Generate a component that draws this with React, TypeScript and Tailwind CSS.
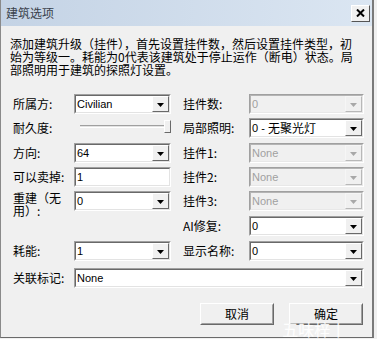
import React from "react";

const CJK = "font-['Noto_Sans_CJK_SC','Noto_Sans_CJK_JP',sans-serif]";
const LAT = "font-['Liberation_Sans','Noto_Sans_CJK_SC',sans-serif]";

function Arrow({ disabled }: { disabled?: boolean }) {
  return (
    <div
      className={`w-[17px] h-full flex items-center justify-center border bg-[#f0f0f0] ${
        disabled
          ? "border-t-[#f6f6f6] border-l-[#f6f6f6] border-b-[#b8b8b8] border-r-[#b8b8b8]"
          : "border-t-white border-l-white border-b-[#696969] border-r-[#696969]"
      }`}
    >
      <svg width="7" height="4" viewBox="0 0 7 4" className="mt-[1px]">
        <path d="M0 0h7L3.5 4z" fill={disabled ? "#a8a8a8" : "#000"} />
      </svg>
    </div>
  );
}

function Field({
  children,
  disabled,
  className = "",
  arrow = true,
}: {
  children?: React.ReactNode;
  disabled?: boolean;
  className?: string;
  arrow?: boolean;
}) {
  return (
    <div
      className={`h-[20px] border border-t-[#a0a0a0] border-l-[#a0a0a0] border-b-white border-r-white ${className}`}
    >
      <div
        className={`h-full flex border ${
          disabled
            ? "bg-[#f0f0f0] border-t-[#b4b4b4] border-l-[#b4b4b4] border-b-[#e8e8e8] border-r-[#e8e8e8]"
            : "bg-white border-t-[#696969] border-l-[#696969] border-b-[#e3e3e3] border-r-[#e3e3e3]"
        }`}
      >
        <div
          className={`flex-1 flex items-center pl-[1px] text-[11px] leading-none whitespace-pre ${LAT} ${
            disabled ? "text-[#a0a0a0]" : "text-black"
          }`}
        >
          {children}
        </div>
        {arrow && <Arrow disabled={disabled} />}
      </div>
    </div>
  );
}

function Label({ children, className = "" }: { children: React.ReactNode; className?: string }) {
  return (
    <div className={`text-[12px] leading-[12px] text-black whitespace-nowrap ${CJK} ${className}`}>
      {children}
    </div>
  );
}

function Button({ children }: { children: React.ReactNode }) {
  return (
    <div className="w-[74px] h-[22px] border border-t-white border-l-white border-b-[#696969] border-r-[#696969] bg-[#f0f0f0]">
      <div
        className={`h-full flex items-center justify-center border border-t-[#f0f0f0] border-l-[#f0f0f0] border-b-[#a0a0a0] border-r-[#a0a0a0] text-[12px] text-black ${CJK}`}
      >
        {children}
      </div>
    </div>
  );
}

export default function App() {
  return (
    <div className="w-[377px] h-[339px] bg-[#f0f0f0] relative overflow-hidden">
      <div className="w-[374px] h-[338px] border-l border-r-2 border-b border-l-[#8a8a8a] border-r-[#7a7a7a] border-b-[#6a6a6a] flex flex-col">
        {/* Title bar */}
        <div className="h-[26px] flex items-center justify-between pl-[5px] pr-[2px] bg-linear-to-r from-[#c4d3e5] to-[#dbe6f2]">
          <span className={`text-[12px] text-[#3a424c] ${CJK}`}>建筑选项</span>
          <div className="w-[19px] h-[17px] border border-t-white border-l-white border-b-[#555] border-r-[#555] bg-[#f0f0f0] flex items-center justify-center">
            <svg width="9" height="8" viewBox="0 0 9 8">
              <path d="M1 0.5 L8 7.5 M8 0.5 L1 7.5" stroke="#000" strokeWidth="2" />
            </svg>
          </div>
        </div>

        {/* Body */}
        <div className="flex flex-col pl-[12px]">
          <div className={`mt-[11px] ml-[-3px] text-[12px] leading-[13px] text-black ${CJK}`}>
            <div className="whitespace-nowrap">添加建筑升级（挂件），首先设置挂件数，然后设置挂件类型，初</div>
            <div className="whitespace-nowrap">始为等级一。耗能为0代表该建筑处于停止运作（断电）状态。局</div>
            <div className="whitespace-nowrap">部照明用于建筑的探照灯设置。</div>
          </div>

          {/* Row 1 */}
          <div className="mt-[18px] h-[20px] flex items-center">
            <Label className="w-[61px]">所属方:</Label>
            <Field className="w-[97px]">Civilian</Field>
            <div className="w-[12px]" />
            <Label className="w-[66px]">挂件数:</Label>
            <Field className="w-[115px]" disabled>0</Field>
          </div>

          {/* Row 2 */}
          <div className="mt-[4px] h-[20px] flex items-center">
            <Label className="w-[61px]">耐久度:</Label>
            <div className="w-[97px] h-[20px] flex items-center pl-[6px]">
              <div className="flex-1 h-[3px] border-t border-t-[#a0a0a0] border-b border-b-white bg-[#e3e3e3] mt-[-4px]" />
              <div className="w-[7px] h-[13px] border border-t-white border-l-white border-b-[#696969] border-r-[#696969] bg-[#f0f0f0] mt-[-3px]" />
            </div>
            <div className="w-[12px]" />
            <Label className="w-[66px]">局部照明:</Label>
            <Field className="w-[115px]">
              <span>0&nbsp;-&nbsp;</span>
              <span className={`text-[12px] ${CJK}`}>无聚光灯</span>
            </Field>
          </div>

          {/* Row 3 */}
          <div className="mt-[5px] h-[20px] flex items-center">
            <Label className="w-[61px]">方向:</Label>
            <Field className="w-[97px]">64</Field>
            <div className="w-[12px]" />
            <Label className="w-[66px]">挂件1:</Label>
            <Field className="w-[115px]" disabled>None</Field>
          </div>

          {/* Row 4 */}
          <div className="mt-[4px] h-[20px] flex items-center">
            <Label className="w-[61px]">可以卖掉:</Label>
            <Field className="w-[97px]" arrow={false}>1</Field>
            <div className="w-[12px]" />
            <Label className="w-[66px]">挂件2:</Label>
            <Field className="w-[115px]" disabled>None</Field>
          </div>

          {/* Row 5 */}
          <div className="mt-[4px] h-[20px] flex items-center">
            <Label className="w-[61px] mt-[6px] leading-[13px]">
              重建（无
              <br />
              用）:
            </Label>
            <Field className="w-[97px]">0</Field>
            <div className="w-[12px]" />
            <Label className="w-[66px]">挂件3:</Label>
            <Field className="w-[115px]" disabled>None</Field>
          </div>

          {/* Row 6 */}
          <div className="mt-[5px] h-[20px] flex items-center">
            <div className="w-[61px]" />
            <div className="w-[97px]" />
            <div className="w-[12px]" />
            <Label className="w-[66px]">AI修复:</Label>
            <Field className="w-[115px]">0</Field>
          </div>

          {/* Row 7 */}
          <div className="mt-[5px] h-[20px] flex items-center">
            <Label className="w-[61px]">耗能:</Label>
            <Field className="w-[97px]">1</Field>
            <div className="w-[12px]" />
            <Label className="w-[66px]">显示名称:</Label>
            <Field className="w-[115px]">0</Field>
          </div>

          {/* Row 8 */}
          <div className="mt-[7px] h-[20px] flex items-center">
            <Label className="w-[61px]">关联标记:</Label>
            <Field className="w-[290px]">None</Field>
          </div>

          {/* Buttons */}
          <div className="mt-[15px] flex gap-[15px] ml-[187px]">
            <Button>取消</Button>
            <Button>确定</Button>
          </div>
        </div>
      </div>

      {/* Watermark overlay */}
      <div className="absolute left-[222px] top-[321px] flex items-end gap-[14px] text-white/90 pointer-events-none">
        <span className={`text-[16px] leading-[17px] font-bold italic ${LAT}`}>bilibili</span>
        <span className={`text-[16px] leading-[17px] ${CJK}`}>五味梓丨WWZ</span>
      </div>
    </div>
  );
}
